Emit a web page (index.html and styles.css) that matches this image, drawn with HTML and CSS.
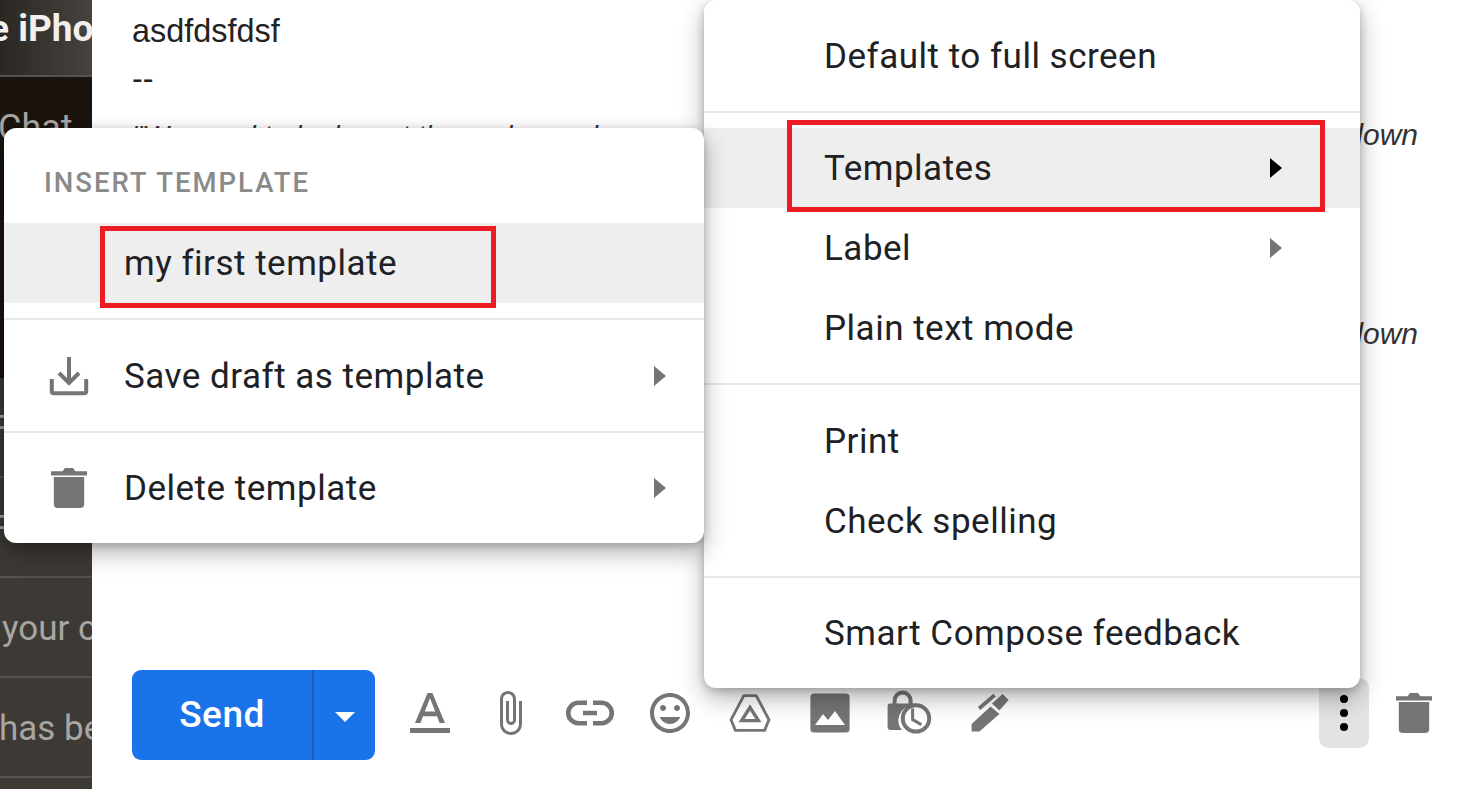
FILE: index.html
```html
<!DOCTYPE html>
<html lang="en">
<head>
  <meta charset="UTF-8">
  <title>Insert template</title>
  <link rel="stylesheet" href="styles.css">
</head>
<body>

  <div class="app">
    <div class="inbox">
      <div class="inbox-row inbox-row-first"><span class="subject">e iPhone</span></div>
      <div class="inbox-row inbox-row-dark inbox-row-chat"><span class="snippet-chat">Chat</span></div>
      <div class="inbox-row inbox-row-dark"><span></span></div>
      <div class="inbox-row inbox-row-dark"><span></span></div>
      <div class="inbox-row"><span class="snippet-far">Free</span></div>
      <div class="inbox-row"><span class="snippet-far">Free</span></div>
      <div class="inbox-row"><span class="snippet-your">your c</span></div>
      <div class="inbox-row"><span class="snippet-has">has been</span></div>
    </div>

    <div class="compose">
      <div class="compose-body">
        <p>asdfdsfdsf</p>
        <p>--</p>
        <p class="quote quote-first"><span>"We need to look past the end sound</span><span class="quote-end">down</span></p>
        <p class="quote"><span></span><span class="quote-end">down</span></p>
      </div>

      <div class="toolbar">
        <div class="send">
          <span class="send-label">Send</span>
          <span class="send-more"><i class="caret-down"></i></span>
        </div>

        <div class="tools">
          <span class="tool">
            <svg class="icon" viewBox="0 0 24 24"><path d="M2 19.500h20V22H2zM10.800 2 4.500 17h2.700l1.300-3.400h7l1.300 3.400h2.700L13.200 2h-2.400zM9.400 11.300 12 4.600l2.600 6.700H9.400z"/></svg>
          </span>
          <span class="tool">
            <svg class="icon" viewBox="0 0 24 24"><path d="M16.500 6v11.500c0 2.210-1.790 4-4 4s-4-1.790-4-4V5c0-1.380 1.120-2.500 2.500-2.500s2.500 1.120 2.500 2.500v10.500c0 .55-.45 1-1 1s-1-.45-1-1V6H10v9.500c0 1.380 1.120 2.500 2.500 2.500s2.500-1.120 2.500-2.500V5c0-2.210-1.790-4-4-4S7 2.790 7 5v12.500c0 3.040 2.460 5.500 5.500 5.500s5.500-2.460 5.500-5.500V6h-1.500z"/></svg>
          </span>
          <span class="tool">
            <svg class="icon icon-line" viewBox="0 0 24 24"><path d="M10.500 6.900H6.200a5.100 5.100 0 0 0 0 10.200h4.300M13.500 6.900h4.300a5.100 5.100 0 0 1 0 10.200h-4.300M8.500 12h7" stroke-width="2.300"/></svg>
          </span>
          <span class="tool">
            <svg class="icon" viewBox="0 0 24 24"><path d="M11.990 2C6.470 2 2 6.480 2 12s4.470 10 9.990 10C17.520 22 22 17.520 22 12S17.520 2 11.990 2zM12 20c-4.420 0-8-3.580-8-8s3.580-8 8-8 8 3.580 8 8-3.580 8-8 8zm3.500-9c.83 0 1.500-.67 1.500-1.500S16.330 8 15.500 8 14 8.670 14 9.500s.67 1.500 1.500 1.500zm-7 0c.83 0 1.500-.67 1.500-1.500S9.330 8 8.500 8 7 8.670 7 9.500 7.670 11 8.500 11zm3.500 6.500c2.330 0 4.310-1.460 5.110-3.500H6.890c.8 2.040 2.780 3.500 5.110 3.500z"/></svg>
          </span>
          <span class="tool">
            <svg class="icon icon-line" viewBox="0 0 24 24"><path d="M8.900 3.300h6.200L21.500 15.400 19.300 20.700H4.700L2.500 15.400z" stroke-width="1.400" stroke-linejoin="round"/><path d="M12 9.200 16.200 15.800H7.800z" stroke-width="1.700"/></svg>
          </span>
          <span class="tool">
            <svg class="icon" viewBox="0 0 24 24"><path d="M21.800 20V4a1.800 1.800 0 0 0-1.800-1.800H4A1.800 1.800 0 0 0 2.200 4v16A1.800 1.800 0 0 0 4 21.800h16a1.800 1.800 0 0 0 1.800-1.800zM8.500 12.500l2.500 3L14.500 11 19.500 18H4.500l4-5.500z" fill-rule="evenodd"/></svg>
          </span>
          <span class="tool">
            <svg class="icon" viewBox="0 0 24 24"><path d="M2 7.200h1.300V5.800a5 5 0 0 1 10 0v1.400H14v1h-1a7.500 7.500 0 0 0-5 12.300H2a1.200 1.200 0 0 1-1.200-1.200V8.400A1.200 1.200 0 0 1 2 7.200zM5.300 7.200h6V5.800a3 3 0 0 0-6 0z" fill-rule="evenodd"/><circle cx="15" cy="14.700" r="6.600" fill="#fff" stroke="#757575" stroke-width="2"/><path d="M13.300 9.800v5.500l4.400 2.500" fill="none" stroke="#757575" stroke-width="1.500"/></svg>
          </span>
          <span class="tool">
            <svg class="icon" viewBox="0 0 24 24"><path d="M2.800 21.300v-3.800l9.500-8.700 4.400 3.700-10 8.800zM18.300 2.500l3 3-4.600 5.300-3.700-3.600zM5.900 9 13.700 2.400l1.200 1.300-7.700 6.800z"/></svg>
          </span>
        </div>

        <span class="tool-more"><i></i><i></i><i></i></span>
        <span class="tool-trash">
          <svg class="icon" viewBox="0 0 24 24"><path d="M4.400 6.500h15.200V20a2 2 0 0 1-2 2H6.400a2 2 0 0 1-2-2zM3 3.600h5.800L10 2h4l1.200 1.600H21v2.200H3z"/></svg>
        </span>
      </div>
    </div>
  </div>

  <div class="menu menu-main">
    <div class="menu-section">
      <div class="menu-item">Default to full screen</div>
    </div>
    <div class="menu-section menu-section-tight">
      <div class="menu-item active">Templates<i class="arrow arrow-dark"></i><span class="callout callout-templates"></span></div>
      <div class="menu-item">Label<i class="arrow"></i></div>
      <div class="menu-item">Plain text mode</div>
    </div>
    <div class="menu-section">
      <div class="menu-item">Print</div>
      <div class="menu-item">Check spelling</div>
    </div>
    <div class="menu-section menu-section-tight">
      <div class="menu-item">Smart Compose feedback</div>
    </div>
  </div>

  <div class="menu menu-templates">
    <div class="menu-title">INSERT TEMPLATE</div>
    <div class="menu-list">
      <div class="menu-item active">my first template<span class="callout callout-first"></span></div>
    </div>
    <div class="menu-section">
      <div class="menu-item">
        <svg class="icon icon-line menu-icon" viewBox="0 0 24 24"><path d="M3.400 13.500v6.100a1 1 0 0 0 1 1h15.200a1 1 0 0 0 1-1v-6.100M12 2.500v12.500M7 10.500l5 5 5-5" stroke-width="2"/></svg>
        Save draft as template<i class="arrow"></i>
      </div>
    </div>
    <div class="menu-section menu-section-tight">
      <div class="menu-item">
        <svg class="icon menu-icon" viewBox="0 0 24 24"><path d="M4.400 6.500h15.200V20a2 2 0 0 1-2 2H6.400a2 2 0 0 1-2-2zM3 3.600h5.800L10 2h4l1.200 1.600H21v2.200H3z"/></svg>
        Delete template<i class="arrow"></i>
      </div>
    </div>
  </div>

</body>
</html>
```

FILE: styles.css
```css
html, body {
  margin: 0;
  height: 100%;
  overflow: hidden;
  background-color: #fff;
}
p {
  margin: 0;
}
i {
  display: block;
}

.app {
  display: flex;
  height: 789px;
}

/* inbox list behind the compose window */
.inbox {
  width: 92px;
  flex: none;
  overflow: hidden;
  background-color: #3d3935;
  font-family: "Roboto", sans-serif;
  font-size: 35px;
  color: #a8a5a2;
}
.inbox-row {
  box-sizing: border-box;
  height: 100px;
  padding-top: 2px;
  border-bottom: 2px solid #56524f;
  display: flex;
  align-items: center;
  white-space: nowrap;
}
.inbox-row-first {
  height: 77px;
  padding: 0 0 18px;
  background: linear-gradient(90deg, #2b2723, #46423e);
}
.inbox-row-dark {
  background-color: #1b130d;
  border-bottom-color: #1b130d;
}
.inbox-row-chat {
  height: 101px;
}
.subject {
  margin-left: -11px;
  font-weight: 700;
  font-size: 37px;
  color: #f1f0ef;
}
.snippet-chat {
  margin-left: -2px;
  font-size: 36px;
}
.snippet-far {
  margin-left: -7px;
}
.snippet-your {
  margin-left: 2px;
}
.snippet-has {
  margin-left: -1px;
}

.compose {
  flex: 1;
  display: flex;
  flex-direction: column;
  min-width: 0;
}
.compose-body {
  padding: 7px 48px 0 40px;
  font-family: "Liberation Sans", sans-serif;
  font-size: 32.4px;
  line-height: 48px;
  color: #222;
}
.quote {
  display: flex;
  justify-content: space-between;
  align-items: baseline;
  font-style: italic;
  font-size: 28.5px;
  color: #333;
  white-space: nowrap;
}
.quote-end {
  font-size: 30px;
}
.quote-first {
  margin: 8px 0 151px;
}

/* bottom toolbar */
.toolbar {
  display: flex;
  align-items: flex-start;
  margin-top: auto;
  padding: 0 28px 29px 40px;
}
.send {
  display: flex;
  width: 243px;
  height: 90px;
  flex: none;
  border-radius: 9px;
  background-color: #1a73e8;
  color: #fff;
  font-family: "Roboto", sans-serif;
  font-weight: 500;
  font-size: 37px;
  letter-spacing: 0.5px;
  align-items: stretch;
}
.send-label {
  width: 180px;
  padding-bottom: 2px;
  display: flex;
  align-items: center;
  justify-content: center;
}
.send-more {
  flex: 1;
  border-left: 2px solid #1a5fbd;
  display: flex;
  align-items: center;
  justify-content: center;
}
.caret-down {
  width: 0;
  height: 0;
  margin-top: 4px;
  border-left: 10px solid transparent;
  border-right: 10px solid transparent;
  border-top: 10px solid #fff;
}
.tools {
  display: flex;
  margin-left: 15px;
}
.tool {
  width: 80px;
  height: 70px;
  margin-top: 8px;
  display: flex;
  align-items: center;
  justify-content: center;
}
.icon {
  width: 48px;
  height: 48px;
  flex: none;
  fill: #757575;
}
.icon-line {
  fill: none;
  stroke: #757575;
}
.tool-more {
  margin: 8px 21px 0 auto;
  width: 50px;
  height: 70px;
  border-radius: 9px;
  background-color: #e3e3e3;
  display: flex;
  flex-direction: column;
  align-items: center;
  justify-content: center;
  gap: 6px;
}
.tool-more i {
  width: 8px;
  height: 8px;
  border-radius: 50%;
  background-color: #000;
}
.tool-trash {
  margin-top: 8px;
  height: 70px;
  display: flex;
  align-items: center;
}

/* popup menus */
.menu {
  position: absolute;
  background-color: #fff;
  border-radius: 12px;
  box-shadow: 0 10px 24px rgba(0, 0, 0, 0.3), 0 2px 8px rgba(0, 0, 0, 0.2);
  font-family: "Roboto", sans-serif;
  font-size: 35px;
  color: #202124;
}
.menu-main {
  left: 704px;
  top: 0;
  width: 656px;
  --item-pad: 120px;
}
.menu-templates {
  left: 4px;
  top: 128px;
  width: 700px;
  --item-pad: 120px;
}
.menu-section {
  padding: 16px 0 15px;
}
.menu-section + .menu-section {
  border-top: 2px solid #e8e8e8;
}
.menu-section.menu-section-tight {
  padding-top: 15px;
}
.menu-item {
  position: relative;
  height: 80px;
  display: flex;
  align-items: center;
  padding-left: var(--item-pad);
  white-space: nowrap;
  letter-spacing: 0.5px;
}
.menu-item.active {
  background-color: #eee;
}
.menu-title {
  height: 95px;
  padding-left: 40px;
  box-sizing: border-box;
  padding-top: 38px;
  font-size: 27.5px;
  line-height: 34px;
  font-weight: 500;
  letter-spacing: 2px;
  color: #8a8a8a;
}
.menu-list {
  padding-bottom: 15px;
  border-bottom: 2px solid #e8e8e8;
}
.menu-icon {
  position: absolute;
  left: 41px;
  top: 16px;
}
.arrow {
  position: absolute;
  right: 78px;
  top: 30px;
  width: 0;
  height: 0;
  border-top: 10px solid transparent;
  border-bottom: 10px solid transparent;
  border-left: 12px solid #757575;
}
.menu-templates .arrow {
  right: 38px;
}
.arrow-dark {
  border-left-color: #000;
}

/* red annotation boxes drawn over the screenshot */
.callout {
  position: absolute;
  box-sizing: border-box;
  border: 5px solid #ed1c24;
}
.callout-templates {
  left: 83px;
  top: -8px;
  width: 538px;
  height: 92px;
}
.callout-first {
  left: 96px;
  top: 3px;
  width: 396px;
  height: 82px;
}
```
